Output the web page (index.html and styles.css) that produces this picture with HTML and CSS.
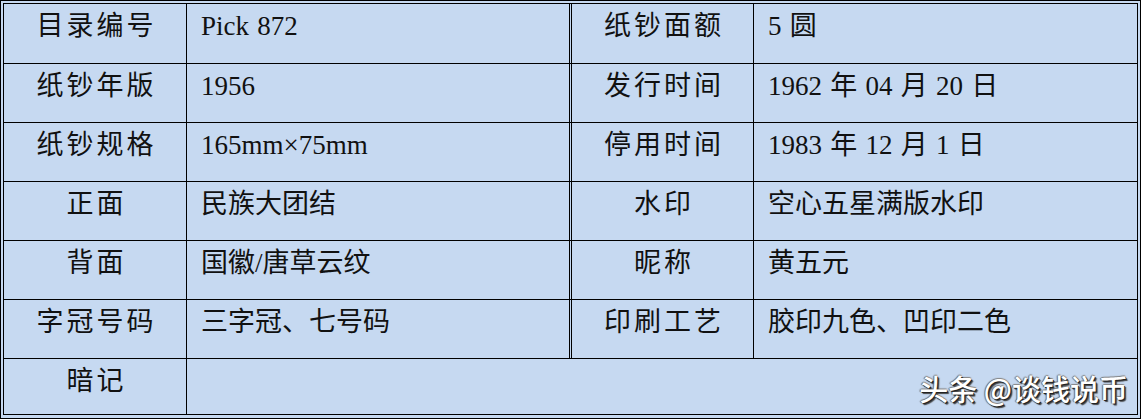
FILE: index.html
```html
<!DOCTYPE html>
<html lang="zh-CN">
<head>
<meta charset="utf-8">
<title>纸钞信息</title>
<link rel="stylesheet" href="styles.css">
</head>
<body>
<div class="sheet">
  <div class="grid">
    <div class="cell label">目录编号</div>
    <div class="cell val">Pick 872</div>
    <div class="cell label label2">纸钞面额</div>
    <div class="cell val">5 圆</div>

    <div class="cell label">纸钞年版</div>
    <div class="cell val">1956</div>
    <div class="cell label label2">发行时间</div>
    <div class="cell val">1962 年 04 月 20 日</div>

    <div class="cell label">纸钞规格</div>
    <div class="cell val">165mm×75mm</div>
    <div class="cell label label2">停用时间</div>
    <div class="cell val">1983 年 12 月 1 日</div>

    <div class="cell label">正面</div>
    <div class="cell val">民族大团结</div>
    <div class="cell label label2">水印</div>
    <div class="cell val">空心五星满版水印</div>

    <div class="cell label">背面</div>
    <div class="cell val">国徽/唐草云纹</div>
    <div class="cell label label2">昵称</div>
    <div class="cell val">黄五元</div>

    <div class="cell label">字冠号码</div>
    <div class="cell val">三字冠、七号码</div>
    <div class="cell label label2">印刷工艺</div>
    <div class="cell val">胶印九色、凹印二色</div>

    <div class="cell label last">暗记</div>
    <div class="cell val last span"></div>
  </div>
  <div class="mark">头条 @谈钱说币</div>
</div>
</body>
</html>
```

FILE: styles.css
```css
html, body {
  margin: 0;
  padding: 0;
  background: #c6d9f1;
}

.sheet {
  position: relative;
  box-sizing: border-box;
  width: 1141px;
  height: 419px;
  border: 1px solid #000;
  padding: 2px 2px 3px 2px;
  background: #c6d9f1;
}

.grid {
  display: grid;
  border: 1px solid #000;
  grid-template-columns: 183px 382px 185px 383px;
  grid-template-rows: 60px 59px 59px 59px 59px 59px 55px;
  color: #111;
}

.cell {
  box-sizing: border-box;
  border-bottom: 1px solid #000;
}

.cell.last {
  border-bottom: none;
}

.label {
  border-right: 1px solid #000;
  text-align: center;
  font-family: "Noto Sans CJK SC", sans-serif;
  font-size: 27px;
  line-height: 36px;
  letter-spacing: 3px;
  padding: 2px 0 0 3px;
}

.label2 {
  border-left: 3px double #000;
}

.val {
  font-family: "Liberation Serif", "Noto Sans CJK SC", serif;
  font-size: 27px;
  line-height: 36px;
  word-spacing: 1.5px;
  padding: 4px 0 0 14px;
}

.span {
  grid-column: 2 / 5;
}

.mark {
  position: absolute;
  right: 12px;
  top: 369px;
  font-family: "Noto Sans CJK SC", sans-serif;
  font-size: 29px;
  font-weight: 500;
  line-height: 36px;
  color: #fff;
  text-shadow: 1px 1px 0 #222, 2px 2px 1px #444, -1px 0 1px #666, 0 -1px 1px #888;
}
```
